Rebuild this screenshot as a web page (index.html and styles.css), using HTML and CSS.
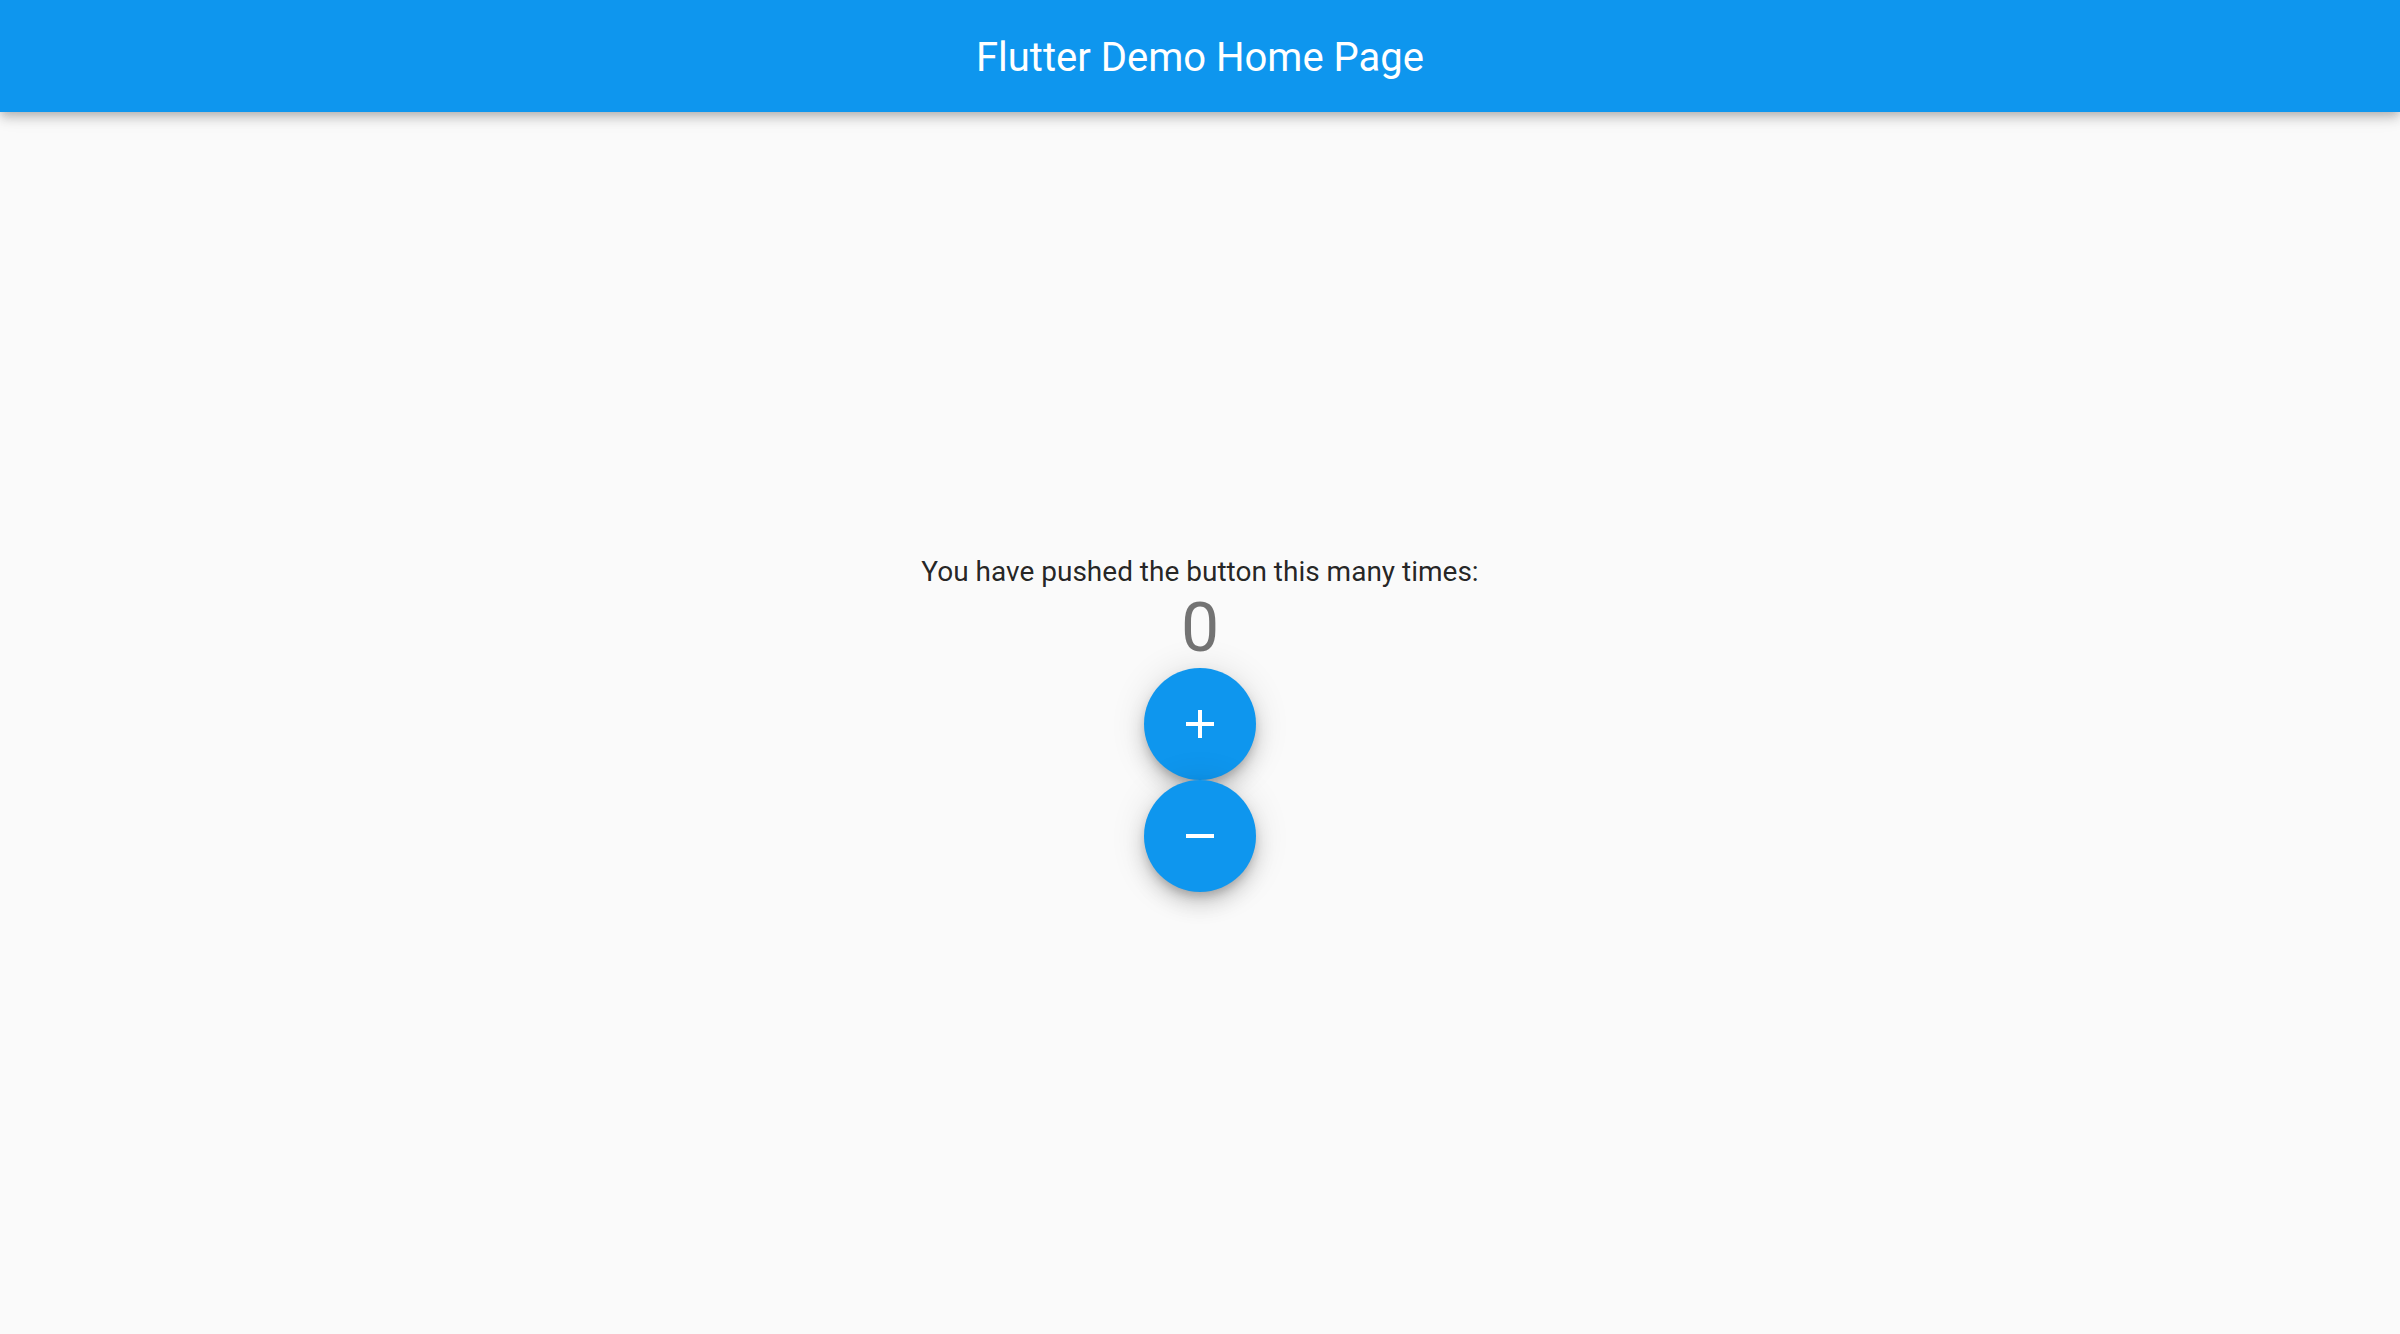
FILE: index.html
```html
<!DOCTYPE html>
<html>
<head>
<meta charset="utf-8">
<title>Flutter Demo Home Page</title>
<link rel="stylesheet" href="styles.css">
</head>
<body>
<div class="app">
  <header class="appbar">
    <h1 class="title">Flutter Demo Home Page</h1>
  </header>
  <main class="body">
    <div class="column">
      <p class="label">You have pushed the button this many times:</p>
      <div class="counter">0</div>
      <button class="fab" aria-label="Increment">
        <svg viewBox="0 0 24 24" width="48" height="48"><path d="M19 13h-6v6h-2v-6H5v-2h6V5h2v6h6v2z" fill="#fff"/></svg>
      </button>
      <button class="fab" aria-label="Decrement">
        <svg viewBox="0 0 24 24" width="48" height="48"><path d="M19 13H5v-2h14v2z" fill="#fff"/></svg>
      </button>
    </div>
  </main>
</div>
</body>
</html>
```
FILE: styles.css
```css
html, body {
  margin: 0;
  padding: 0;
  height: 100%;
}
body {
  background: #fafafa;
  font-family: Roboto, "Liberation Sans", sans-serif;
  overflow: hidden;
}
.app {
  display: flex;
  flex-direction: column;
  height: 100vh;
}
.appbar {
  flex: 0 0 112px;
  height: 112px;
  box-sizing: border-box;
  padding-top: 3px;
  background: #0e96ee;
  display: flex;
  align-items: center;
  justify-content: center;
  position: relative;
  z-index: 2;
  box-shadow: 0 4px 8px -2px rgba(0,0,0,.16), 0 8px 10px 0 rgba(0,0,0,.1), 0 2px 20px 0 rgba(0,0,0,.1);
}
.title {
  margin: 0;
  font-size: 40px;
  font-weight: 400;
  color: #fff;
  line-height: normal;
}
.body {
  flex: 1;
  display: flex;
  align-items: center;
  justify-content: center;
}
.column {
  display: flex;
  flex-direction: column;
  align-items: center;
}
.label {
  margin: 0;
  font-size: 28px;
  line-height: normal;
  color: rgba(0,0,0,.87);
}
.counter {
  font-size: 68px;
  line-height: normal;
  color: rgba(0,0,0,.54);
}
.fab {
  width: 112px;
  height: 112px;
  border-radius: 50%;
  border: none;
  padding: 0;
  background: #0e96ee;
  display: flex;
  align-items: center;
  justify-content: center;
  box-shadow: 0 6px 10px -2px rgba(0,0,0,.2), 0 12px 20px 0 rgba(0,0,0,.14), 0 2px 36px 0 rgba(0,0,0,.12);
  cursor: pointer;
}
.fab svg {
  display: block;
}
```
